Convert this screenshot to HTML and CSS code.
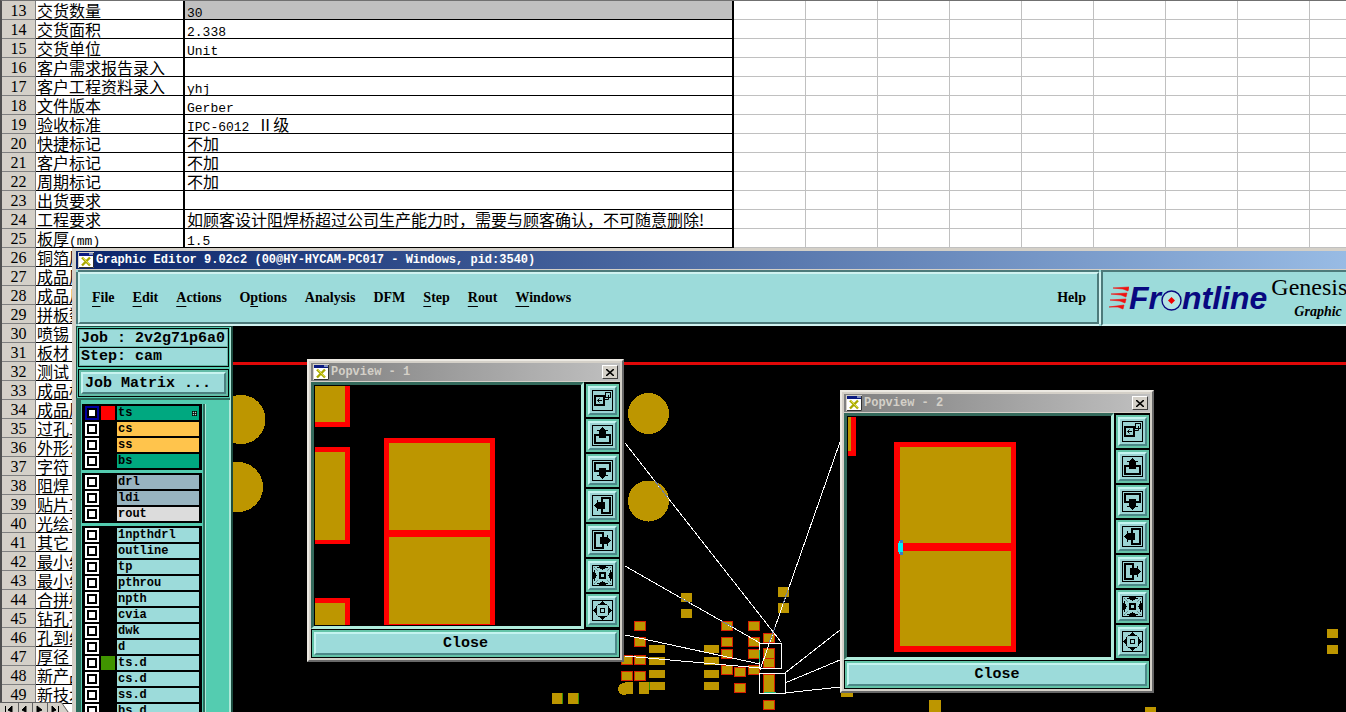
FILE: index.html
```html
<!DOCTYPE html>
<html lang="zh-CN">
<head>
<meta charset="utf-8">
<title>Graphic Editor</title>
<link rel="stylesheet" href="styles.css">
</head>
<body>
<svg class="defs" aria-hidden="true">
  <symbol id="app" viewBox="0 0 16 16">
    <rect width="16" height="16" fill="#d4d0c8"/><rect x="1" y="1" width="14" height="14" fill="#fff"/>
    <rect x="1" y="1" width="14" height="3" fill="#0a1a80"/><rect x="11" y="1" width="4" height="2" fill="#8090c0"/>
    <path d="M15.500 1V15.500H1" fill="none" stroke="#303030"/>
    <path d="M4 5.500l8 8M12 5.500l-8 8" stroke="#a8a800" stroke-width="2.400"/><path d="M4.500 5.500l7 7" stroke="#e0e040"/>
  </symbol>
  <symbol id="t-link" viewBox="0 0 21 21">
    <rect x=".5" y=".5" width="20" height="20" fill="none" stroke="#000"/>
    <rect x="3" y="6" width="9" height="9" fill="none" stroke="#000" stroke-width="2"/>
    <rect x="13.500" y="2.500" width="5" height="5" fill="none" stroke="#000"/><path d="M12 9.500h4.500V5M5.500 10.500H10M7.500 8.500l-2 2 2 2" fill="none" stroke="#000"/>
  </symbol>
  <symbol id="t-up" viewBox="0 0 21 21">
    <rect x=".5" y=".5" width="20" height="20" fill="none" stroke="#000"/>
    <path d="M7 10H3v8h15v-8h-4" fill="none" stroke="#000" stroke-width="2"/>
    <path d="M10 2h1v1h1v1h1v1h3v1h-2v7H7V6H5V5h3V4h1V3h1z"/>
  </symbol>
  <symbol id="t-in" viewBox="0 0 21 21">
    <rect x=".5" y=".5" width="20" height="20" fill="none" stroke="#000"/>
    <rect x="8" y="8" width="5" height="5" fill="none" stroke="#000" stroke-width="2"/>
    <path d="M7 1h7v1h2v1h-3v1h-2v1h-1V4H8V3H5V2h2zM7 20h7v-1h2v-1h-3v-1h-2v-1h-1v1H8v1H5v1h2zM1 7v7h1v2h1v-3h1v-2h1v-1H4V8H3V5H2v2zM20 7v7h-1v2h-1v-3h-1v-2h-1v-1h1V8h1V5h1v2z"/>
    <path d="M2.500 2.500l4 4M18.500 2.500l-4 4M2.500 18.500l4-4M18.500 18.500l-4-4" stroke="#000" stroke-dasharray="1 2"/>
  </symbol>
  <symbol id="t-out" viewBox="0 0 21 21">
    <rect x=".5" y=".5" width="20" height="20" fill="none" stroke="#000"/>
    <rect x="8.500" y="8.500" width="4" height="4" fill="none" stroke="#000"/>
    <path d="M10 1h1v1h1v1h1v1h2v1H6V4h2V3h1V2h1zM10 20h1v-1h1v-1h1v-1h2v-1H6v1h2v1h1v1h1zM1 10v1h1v1h1v1h1v2h1V6H4v2H3v1H2v1zM20 10v1h-1v1h-1v1h-1v2h-1V6h1v2h1v1h1v1z"/>
    <path d="M6.500 4.500l-2 2M14.500 4.500l2 2M6.500 16.500l-2-2M14.500 16.500l2-2" stroke="#000" stroke-dasharray="1 1"/>
  </symbol>
</svg>
<main class="desktop">
  <table class="sheet">
    <colgroup><col class="c-num"><col class="c-key"><col class="c-val"><col class="c-rest"></colgroup>
    <tbody>
      <tr><th>13</th><td>交货数量</td><td class="selected"><span>30</span></td><td class="rest"></td></tr>
      <tr><th>14</th><td>交货面积</td><td><span>2.338</span></td><td class="rest"></td></tr>
      <tr><th>15</th><td>交货单位</td><td><span>Unit</span></td><td class="rest"></td></tr>
      <tr><th>16</th><td>客户需求报告录入</td><td></td><td class="rest"></td></tr>
      <tr><th>17</th><td>客户工程资料录入</td><td><span>yhj</span></td><td class="rest"></td></tr>
      <tr><th>18</th><td>文件版本</td><td><span>Gerber</span></td><td class="rest"></td></tr>
      <tr><th>19</th><td>验收标准</td><td><span>IPC-6012 </span>Ⅱ级</td><td class="rest"></td></tr>
      <tr><th>20</th><td>快捷标记</td><td>不加</td><td class="rest"></td></tr>
      <tr><th>21</th><td>客户标记</td><td>不加</td><td class="rest"></td></tr>
      <tr><th>22</th><td>周期标记</td><td>不加</td><td class="rest"></td></tr>
      <tr><th>23</th><td>出货要求</td><td></td><td class="rest"></td></tr>
      <tr><th>24</th><td>工程要求</td><td>如顾客设计阻焊桥超过公司生产能力时，需要与顾客确认，不可随意删除!</td><td class="rest"></td></tr>
      <tr><th>25</th><td>板厚<span>(mm)</span></td><td><span>1.5</span></td><td class="rest"></td></tr>
      <tr><th>26</th><td>铜箔厚</td><td></td><td class="rest"></td></tr>
      <tr><th>27</th><td>成品厚</td><td></td><td class="rest"></td></tr>
      <tr><th>28</th><td>成品尺</td><td></td><td class="rest"></td></tr>
      <tr><th>29</th><td>拼板数</td><td></td><td class="rest"></td></tr>
      <tr><th>30</th><td>喷锡</td><td></td><td class="rest"></td></tr>
      <tr><th>31</th><td>板材</td><td></td><td class="rest"></td></tr>
      <tr><th>32</th><td>测试</td><td></td><td class="rest"></td></tr>
      <tr><th>33</th><td>成品板</td><td></td><td class="rest"></td></tr>
      <tr><th>34</th><td>成品厚</td><td></td><td class="rest"></td></tr>
      <tr><th>35</th><td>过孔工</td><td></td><td class="rest"></td></tr>
      <tr><th>36</th><td>外形公</td><td></td><td class="rest"></td></tr>
      <tr><th>37</th><td>字符</td><td></td><td class="rest"></td></tr>
      <tr><th>38</th><td>阻焊</td><td></td><td class="rest"></td></tr>
      <tr><th>39</th><td>贴片工</td><td></td><td class="rest"></td></tr>
      <tr><th>40</th><td>光绘工</td><td></td><td class="rest"></td></tr>
      <tr><th>41</th><td>其它</td><td></td><td class="rest"></td></tr>
      <tr><th>42</th><td>最小线</td><td></td><td class="rest"></td></tr>
      <tr><th>43</th><td>最小线</td><td></td><td class="rest"></td></tr>
      <tr><th>44</th><td>合拼板</td><td></td><td class="rest"></td></tr>
      <tr><th>45</th><td>钻孔孔</td><td></td><td class="rest"></td></tr>
      <tr><th>46</th><td>孔到线</td><td></td><td class="rest"></td></tr>
      <tr><th>47</th><td>厚径</td><td></td><td class="rest"></td></tr>
      <tr><th>48</th><td>新产品</td><td></td><td class="rest"></td></tr>
      <tr><th>49</th><td>新技术</td><td></td><td class="rest"></td></tr>
    </tbody>
  </table>
  <svg class="sheet-nav" width="72" height="10" aria-hidden="true">
    <rect width="61" height="10" fill="#d4d0c8"/><path d="M61 0l8 10h-8z" fill="#d4d0c8"/><path d="M0 .5H61.500L68 10M18.500 1v9M32.500 1v9M47.500 1v9" fill="none" stroke="#606060"/>
    <path d="M5.500 4v6M12 4v6l-4-2zM26 4v6l-4-2zM37 4v6l5-2zM52 4v6l4-2zM58.500 4v6" stroke="#000"/>
  </svg>

  <section class="editor">
    <header class="titlebar">
      <svg class="app-icon"><use href="#app"/></svg>
      <h1>Graphic Editor 9.02c2 (00@HY-HYCAM-PC017 - Windows, pid:3540)</h1>
    </header>
    <div class="top">
      <nav class="menubar">
        <button><u>F</u>ile</button><button><u>E</u>dit</button><button><u>A</u>ctions</button><button>O<u>p</u>tions</button><button>Analysis</button><button>DFM</button><button><u>S</u>tep</button><button><u>R</u>out</button><button><u>W</u>indows</button><button class="help">Help</button>
      </nav>
      <div class="brand">
        <div class="logo">
          <svg width="20" height="24" aria-hidden="true"><path d="M4 2l16-1-1 4-5-2zM2 8l16-1-1 4-5-2zM1 14l16-1-1 4-5-2zM0 21l15-2-1 4-5-2z" fill="#f01010" stroke="#f01010" stroke-width=".6"/></svg>
          <span>Fr</span><svg class="target" width="21" height="21" aria-hidden="true"><circle cx="10.500" cy="10.500" r="9.500" fill="#b4e4e4" stroke="#080880" stroke-width="1.400"/><path d="M10.500 7l3.500 3.500-3.500 3.500L7 10.500z" fill="#f00000"/></svg><span>ntline</span>
        </div>
        <div class="product"><span class="name">Genesis</span><span class="sub">Graphic</span></div>
      </div>
    </div>
    <div class="work">
      <aside class="side">
        <div class="job">
          <p>Job : 2v2g71p6a0</p>
          <p>Step: cam</p>
        </div>
        <div class="matrix"><button>Job Matrix ...</button></div>
        <div class="layers">
          <div class="list">
            <ul>
              <li><label class="green active"><input type="checkbox"><i class="red"></i><span>ts<svg class="mark" width="5" height="5"><path d="M0 .5h5M0 2.500h5M0 4.500h5M.5 0v5M2.500 0v5M4.500 0v5" stroke="#000" stroke-width=".8"/></svg></span></label></li>
              <li><label class="orange"><input type="checkbox"><i></i><span>cs</span></label></li>
              <li><label class="orange"><input type="checkbox"><i></i><span>ss</span></label></li>
              <li><label class="green"><input type="checkbox"><i></i><span>bs</span></label></li>
            </ul>
            <ul>
              <li><label class="steel"><input type="checkbox"><i></i><span>drl</span></label></li>
              <li><label class="steel"><input type="checkbox"><i></i><span>ldi</span></label></li>
              <li><label class="grey"><input type="checkbox"><i></i><span>rout</span></label></li>
            </ul>
            <ul>
              <li><label><input type="checkbox"><i></i><span>1npthdrl</span></label></li>
              <li><label><input type="checkbox"><i></i><span>outline</span></label></li>
              <li><label><input type="checkbox"><i></i><span>tp</span></label></li>
              <li><label><input type="checkbox"><i></i><span>pthrou</span></label></li>
              <li><label><input type="checkbox"><i></i><span>npth</span></label></li>
              <li><label><input type="checkbox"><i></i><span>cvia</span></label></li>
              <li><label><input type="checkbox"><i></i><span>dwk</span></label></li>
              <li><label><input type="checkbox"><i></i><span>d</span></label></li>
              <li><label><input type="checkbox"><i class="leaf"></i><span>ts.d</span></label></li>
              <li><label><input type="checkbox"><i></i><span>cs.d</span></label></li>
              <li><label><input type="checkbox"><i></i><span>ss.d</span></label></li>
              <li><label><input type="checkbox"><i></i><span>bs.d</span></label></li>
            </ul>
          </div>
        </div>
      </aside>
      <div class="canvas">
        <svg class="board" aria-hidden="true">
          <g transform="translate(-233 -326)" shape-rendering="crispEdges">
            <rect x="233" y="362" width="3000" height="3" fill="#e00808"/>
            <g fill="#bd9600">
              <circle cx="241" cy="419.500" r="24.500"/><circle cx="238" cy="487" r="25"/>
              <circle cx="648.500" cy="413.500" r="20.500"/><circle cx="648.500" cy="501" r="20.500"/>
              <path d="M681 593h11v9h-11zM681 609h11v9h-11zM778 587h11v10h-11zM778 603h11v10h-11z"/>
              <path d="M649 645h16v8h-16zM649 657h16v8h-16zM649 670h16v8h-16zM649 682h16v8h-16zM704 645h15v8h-15zM704 657h15v8h-15zM704 670h15v8h-15zM704 682h15v8h-15z"/>
              <circle cx="624" cy="689" r="6"/><path d="M625 682h8v12h-8zM639 682h10v12h-10zM552 693h10v11h-10zM568 693h10v11h-10z"/>
              <path d="M841 691h12v6h-12zM929 700h12v12h-12zM1145 707h11v5h-11zM1327 629h11v9h-11zM1327 645h11v9h-11z"/>
            </g>
            <path d="M562.500 693v11M578.500 693v11M649.500 682v8" stroke="#3c9000"/>
            <g fill="#bd9600" stroke="#d82000">
              <path d="M634.500 621.500h11v9h-11zM634.500 637.500h11v9h-11zM721.500 621.500h11v9h-11zM748.500 621.500h11v9h-11zM721.500 637.500h11v9h-11zM748.500 637.500h11v9h-11zM721.500 649.500h11v9h-11zM748.500 649.500h11v9h-11zM721.500 665.500h11v9h-11zM748.500 665.500h11v9h-11zM734.500 667.500h11v9h-11zM734.500 683.500h11v9h-11z"/>
              <path d="M621.500 655.500h11v9h-11zM634.500 655.500h11v9h-11zM621.500 671.500h11v9h-11zM634.500 671.500h11v9h-11zM763.500 633.500h11v9h-11zM763.500 648.500h11v10h-11zM763.500 658.500h11v9h-11zM763.500 674.500h11v18h-11zM763.500 700.500h11v9h-11z"/>
            </g>
            <path d="M625 443L781 642M625 566l135 77M625 635l135 29M625 656l135 12M840 442l-80 228M840 630l-55 43M840 660l-55 23M840 687l-55 6M759.500 643.500h22v25h-22zM759.500 673.500h26v20h-26z" fill="none" stroke="#fff"/>
            <path d="M764 692.500h12M759.500 650v12" stroke="#20c080"/>
            <path d="M655 481L668 498M681 598l10 6M721 621l12 6M769 643l6-16M783 604l5-14" stroke="#7080a0"/>
          </g>
        </svg>

        <section class="popview first">
          <header><svg class="app-icon"><use href="#app"/></svg><h2>Popview - 1</h2><button class="x" aria-label="Close window"><svg width="8" height="7"><path d="M0 0l8 7M8 0L0 7" stroke="#000" stroke-width="1.600"/></svg></button></header>
          <div class="body">
            <div class="view"><svg aria-hidden="true"><g transform="translate(-315 -385)" shape-rendering="crispEdges">
              <path d="M315 386h35v41h-35zM315 447h35v97h-35zM315 598h35v27h-35zM384 438h111v187H384z" fill="#f00"/>
              <path d="M315 386h30v36h-30zM315 452h30v88h-30zM315 603h30v22h-30zM389 443h101v87H389zM389 537h101v87H389z" fill="#bd9600"/>
            </g></svg></div>
            <div class="tools">
              <button aria-label="Link"><svg><use href="#t-link"/></svg></button>
              <button aria-label="Up"><svg><use href="#t-up"/></svg></button>
              <button aria-label="Down" class="down"><svg><use href="#t-up"/></svg></button>
              <button aria-label="Left" class="left"><svg><use href="#t-up"/></svg></button>
              <button aria-label="Right" class="right"><svg><use href="#t-up"/></svg></button>
              <button aria-label="Zoom in"><svg><use href="#t-in"/></svg></button>
              <button aria-label="Zoom out"><svg><use href="#t-out"/></svg></button>
            </div>
          </div>
          <footer><button>Close</button></footer>
        </section>

        <section class="popview second">
          <header><svg class="app-icon"><use href="#app"/></svg><h2>Popview - 2</h2><button class="x" aria-label="Close window"><svg width="8" height="7"><path d="M0 0l8 7M8 0L0 7" stroke="#000" stroke-width="1.600"/></svg></button></header>
          <div class="body">
            <div class="view"><svg aria-hidden="true"><g transform="translate(-848 -416)" shape-rendering="crispEdges">
              <path d="M848 417h8v39h-8zM894 442h122v210H894z" fill="#f00"/>
              <path d="M848 417h3v34h-3zM900 447h111v96H900zM900 551h111v95H900z" fill="#bd9600"/>
              <path d="M900 540h3v15h-3z" fill="#4078c8"/><path d="M899 541h1v13h-1zM898 543h5v9h-5z" fill="#00f0f8"/>
            </g></svg></div>
            <div class="tools">
              <button aria-label="Link"><svg><use href="#t-link"/></svg></button>
              <button aria-label="Up"><svg><use href="#t-up"/></svg></button>
              <button aria-label="Down" class="down"><svg><use href="#t-up"/></svg></button>
              <button aria-label="Left" class="left"><svg><use href="#t-up"/></svg></button>
              <button aria-label="Right" class="right"><svg><use href="#t-up"/></svg></button>
              <button aria-label="Zoom in"><svg><use href="#t-in"/></svg></button>
              <button aria-label="Zoom out"><svg><use href="#t-out"/></svg></button>
            </div>
          </div>
          <footer><button>Close</button></footer>
        </section>
      </div>
    </div>
  </section>
</main>
</body>
</html>
```
FILE: styles.css
```css
* { box-sizing: border-box; }
body { margin: 0; background: #fff; color: #000; }
button { margin: 0; padding: 0; border: 0; background: none; color: inherit; font: inherit; }
h1, h2, p, ul { margin: 0; padding: 0; list-style: none; }
svg { display: block; flex: none; }
.defs { position: absolute; width: 0; height: 0; }
.desktop { position: relative; height: 100vh; overflow: hidden; }

/* spreadsheet */
.sheet {
  width: 100%; table-layout: fixed; border-collapse: separate; border-spacing: 0;
  border-left: 2px solid #505050; border-top: 1px solid #707070;
}
.c-num { width: 34px; }
.c-key { width: 149px; }
.c-val { width: 549px; }
.sheet th, .sheet td { height: 19px; padding: 0; border: 0 solid #000; border-bottom-width: 1px; white-space: nowrap; overflow: hidden; }
.sheet th { padding-top: 2px; font: 400 16px/16px "Liberation Serif", serif; background: #d4d0c8; border-color: #808080; border-right-width: 1px; }
.sheet td { padding-left: 1px; border-right-width: 2px; font: 400 16px/18px "Noto Sans CJK SC", sans-serif; }
.sheet td + td { padding-left: 2px; }
.sheet span { font: 400 13px/8px "Liberation Mono", monospace; white-space: pre; }
.sheet td.selected { background: #c0c0c0; }
.sheet td.rest { border-color: #c0c0c0; border-right: 0; background: repeating-linear-gradient(90deg, #fff 0 71px, #c0c0c0 71px 72px); }
.sheet-nav { position: absolute; left: 0; bottom: 0; }

/* editor window */
.editor {
  position: absolute; left: 72px; top: 248px; right: 0; bottom: 0;
  display: flex; flex-direction: column; border: solid #d4d0c8; border-width: 3px 0 0 4px;
}
.titlebar {
  display: flex; align-items: center; gap: 2px; height: 19px; padding-left: 2px;
  background: linear-gradient(90deg, #0a246a, #98bbe4); border-bottom: 1px solid #d4d0c8; color: #fff;
}
.app-icon { width: 16px; height: 16px; }
h1, h2 { font: bold 12px/18px "Liberation Mono", monospace; white-space: nowrap; }
.top { display: flex; height: 56px; background: #9cdbda; }
.menubar {
  flex: 1; display: flex; gap: 18px; align-items: center; padding: 0 11px 0 12px; margin: 2px;
  border: 2px solid; border-color: #d0f2f0 #4c7a7a #4c7a7a #d0f2f0;
  box-shadow: 0 -2px #4c7a7a, -2px 0 #4c7a7a, 0 2px #d0f2f0, 2px 0 #d0f2f0;
  font: bold 14px/16px "Liberation Serif", serif;
}
.menubar u { text-underline-offset: 4px; text-decoration-thickness: 1px; }
.menubar .help { margin-left: auto; }
.brand {
  display: flex; flex: none; width: 245px; gap: 4px; padding-left: 6px; overflow: hidden;
  border: solid; border-width: 2px 0 2px 2px; border-color: #4c7a7a #4c7a7a #d0f2f0;
}
.logo { display: flex; align-items: center; font: italic bold 32px/50px "Liberation Sans", sans-serif; color: #080880; }
.target { margin: 4px 0 0; }
.product { display: flex; flex-direction: column; padding-top: 2px; font-family: "Liberation Serif", serif; }
.name { font-size: 24px; line-height: 26px; }
.sub { padding-left: 23px; font: italic bold 14px/24px "Liberation Serif", serif; }
.work { flex: 1; display: flex; min-height: 0; background: #000; }

/* side panel */
.side { flex: none; width: 157px; padding: 2px 1px 0 0; display: flex; flex-direction: column; background: #54ccb0; border-right: 2px solid #1c4c40; overflow: hidden; box-shadow: inset 0 1px #1c4c40, inset 1px 0 #1c4c40, inset -1px 0 #b0e8d8; }
.job, .matrix { font: bold 15px/17px "Liberation Mono", monospace; }
.job { margin: 0 1px 0 2px; border: 1px solid #000; background: #9cdbda; }
.job p { height: 18px; padding-left: 1px; border: 1px solid #64b8a8; white-space: nowrap; }
.job p + p { height: 19px; border-top: 1px solid #000; }
.matrix { margin: 2px 1px 0 2px; border: 1px solid #000; padding: 2px; background: #64bca8; }
.matrix button { display: block; width: 100%; height: 22px; padding-left: 2px; text-align: left; background: #9cdbda; border: 2px solid; border-color: #c8f4f0 #4c8080 #4c8080 #c8f4f0; }
.layers { flex: 1; min-height: 0; margin-top: 1px; padding: 4px 25px 0 5px; border-top: 2px solid #2c6c5c; border-left: 1px solid #2c6c5c; background: linear-gradient(90deg, #2c6c5c 4px, #54ccb0 4px, #54ccb0 calc(100% - 1px), #b0e8d8 0); }
.list { display: flex; flex-direction: column; gap: 3px; padding: 0 1px 0 0; border-right: 2px solid #2c6c5c; box-shadow: 1px 0 #b0e8d8; }
.list ul { padding: 2px 3px 0 3px; background: #000; }
.list label { display: flex; gap: 2px; height: 16px; padding-bottom: 2px; }
.list input { appearance: none; flex: none; width: 14px; height: 14px; margin: 0; border: 2px solid #fff; background: #fff; box-shadow: inset 0 0 0 2px #000; }
.list .active input { border-color: #0000a0; }
.list i { flex: none; width: 14px; }
.list span { position: relative; flex: 1; padding-left: 1px; background: #9cdbda; font: bold 12px/14px "Liberation Mono", monospace; }
.mark { position: absolute; right: 2px; top: 5px; background: #b0e0d0; }
.green span { background: #00a880; }
.orange span { background: #ffc44c; }
.steel span { background: #98b4c0; }
.grey span { background: #dcdcdc; }
.red { background: #f00; }
.leaf { background: #409400; }

/* drawing canvas and its floating views */
.canvas { position: relative; flex: 1; overflow: hidden; }
.board { width: 100%; height: 100%; }
.popview { position: absolute; display: flex; flex-direction: column; padding: 2px; border: 2px solid; border-color: #ece9e2 #686868 #686868 #ece9e2; background: #d4d0c8; }
.first { left: 74px; top: 33px; width: 317px; }
.second { left: 607px; top: 64px; width: 314px; }
.popview header { display: flex; align-items: center; gap: 2px; height: 18px; padding: 0 2px; background: linear-gradient(90deg, #808080, #c0c0c0); color: #d4d0c8; }
.x { display: grid; place-items: center; width: 16px; height: 14px; margin-left: auto; background: #d4d0c8; border: 1px solid; border-color: #fff #404040 #404040 #fff; }
.body { display: flex; gap: 1px; margin-top: 1px; background: #000; }
.view { flex: 1; min-width: 0; border: 3px solid; border-color: #346a5c #b0ecdc #b0ecdc #346a5c; overflow: hidden; display: flex; padding-left: 1px; }
.view svg { flex: 1; width: 100%; height: 240px; }
.tools { display: flex; flex-direction: column; gap: 2px; padding: 2px 1px; }
.tools button { margin: 2px; padding: 2px; background: #9cd4d4; border: 2px solid; border-color: #c4f4f0 #4c8888 #4c8888 #c4f4f0; outline: 2px solid #64c4a8; }
.tools svg { width: 21px; height: 21px; }
.down svg { transform: rotate(180deg); }
.left svg { transform: rotate(-90deg); }
.right svg { transform: rotate(90deg); }
.popview footer { padding: 2px; background: #64c4a8; border: 1px solid #000; }
.popview footer button { display: block; width: 100%; height: 23px; background: #9cdbda; border: 2px solid; border-color: #c4f4f0 #4c8888 #4c8888 #c4f4f0; font: bold 15px/18px "Liberation Mono", monospace; }
```
